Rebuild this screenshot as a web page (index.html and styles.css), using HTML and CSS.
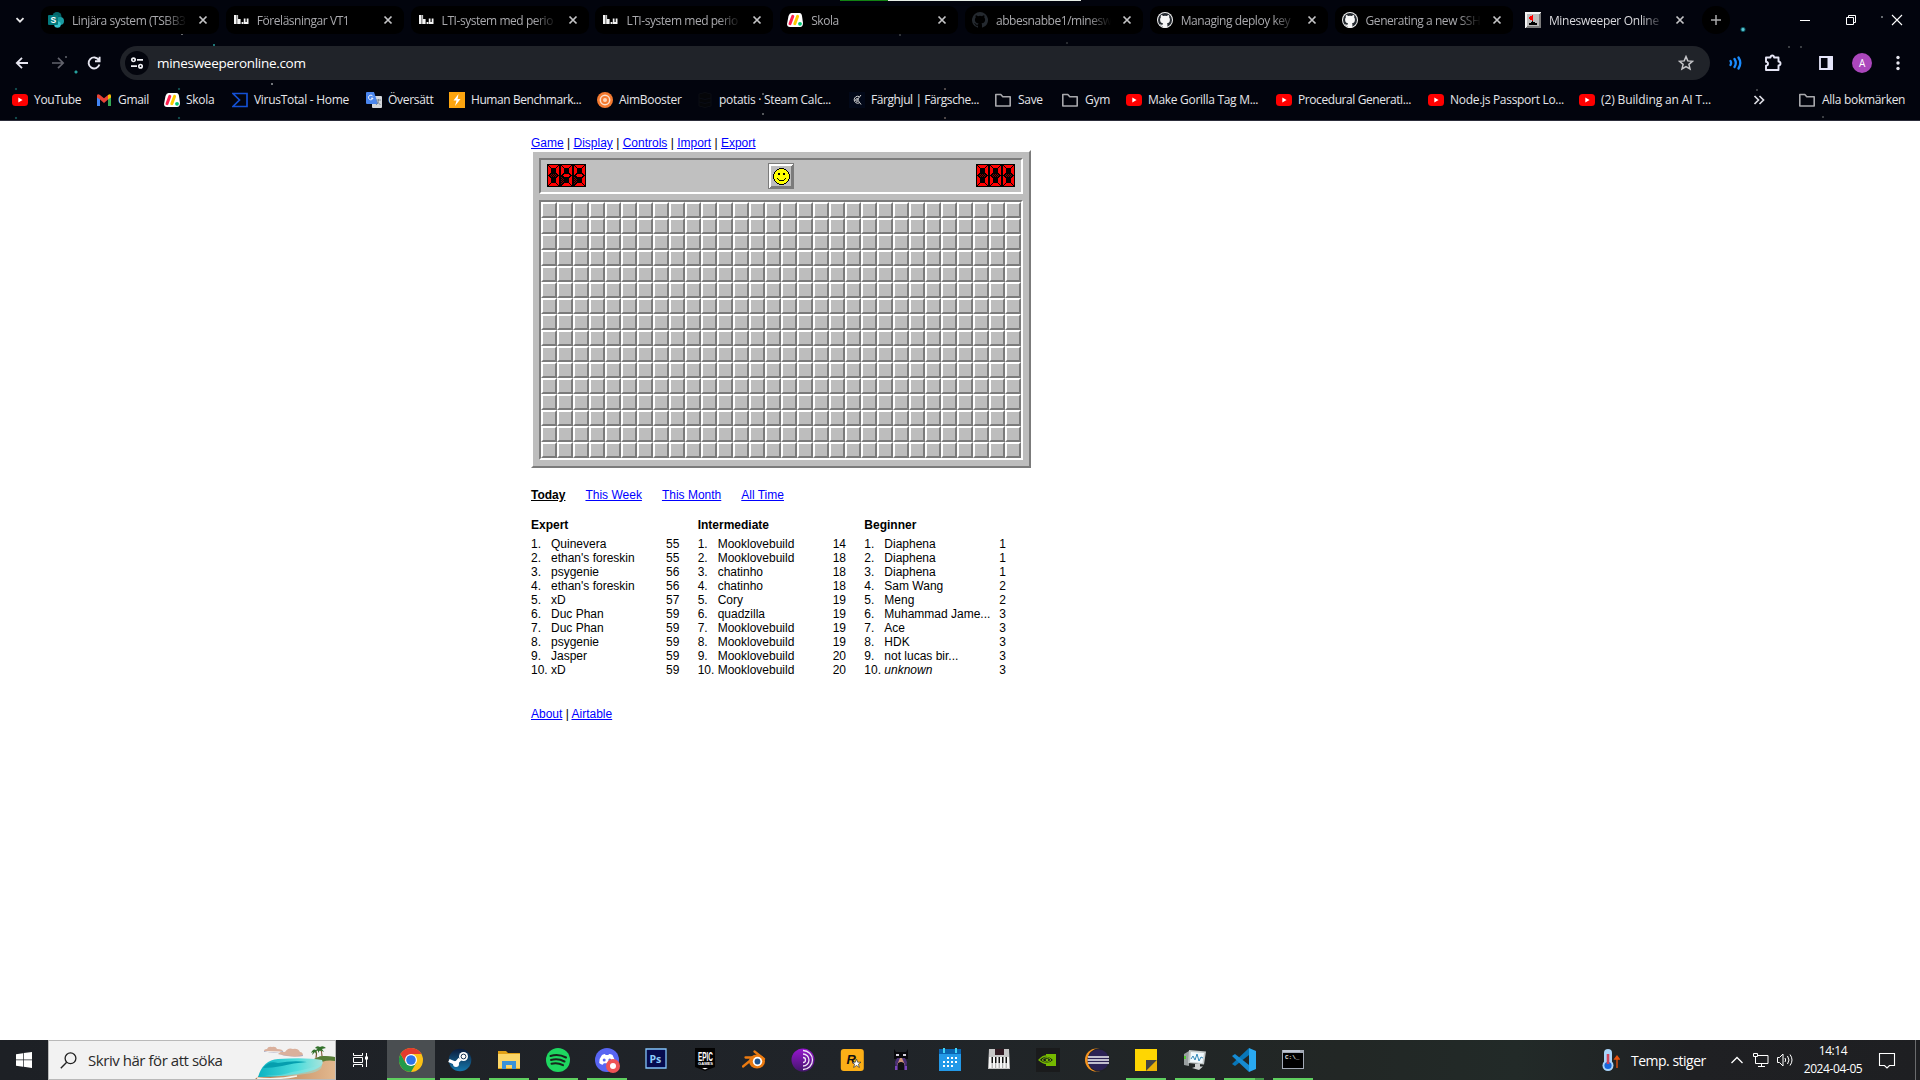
FILE: index.html
```html
<!DOCTYPE html>
<html lang="sv">
<head>
<meta charset="utf-8">
<title>Minesweeper Online</title>
<link rel="stylesheet" href="styles.css">
</head>
<body>
<svg class="defs" width="0" height="0">
  <symbol id="x" viewBox="0 0 10 10"><path d="M1.500 1.500l7 7M8.500 1.500l-7 7" fill="none" stroke="#c4c4c6" stroke-width="1.700"/></symbol>
  <symbol id="liu" viewBox="0 0 16 16"><path d="M1 3h2.600v9H1zM4.200 3h.9v9h-.9zM5 7h2.600v5H5zM8.600 10h1.800v2H8.600zM10.800 6.500h1.700v3.500h1.200V6.500h1.800V12h-4.700z" fill="#f4f4f4"/></symbol>
  <symbol id="monday" viewBox="0 0 16 16"><path d="M4.500 1h8q2 0 2.500 3l1 7q0 4-3 4H3q-3 0-3-3l1.500-8Q2.500 1 4.500 1z" fill="#fff"/><path d="M3 11.700L5.800 4.300" stroke="#ff1f50" stroke-width="3" stroke-linecap="round"/><path d="M7.800 11.700l2.800-7.400" stroke="#ffcb00" stroke-width="3" stroke-linecap="round"/><circle cx="13" cy="11.800" r="1.900" fill="#00c875"/></symbol>
  <symbol id="github" viewBox="0 0 16 16"><path d="M8 0a8 8 0 0 0-2.530 15.590c.4.070.55-.17.55-.38v-1.490c-2.230.48-2.700-.94-2.700-.94-.36-.92-.89-1.170-.89-1.170-.73-.5.050-.49.050-.49.800.060 1.230.83 1.230.83.72 1.220 1.870.87 2.330.66.070-.52.280-.87.510-1.070-1.780-.2-3.640-.89-3.640-3.950 0-.87.310-1.590.82-2.150-.080-.2-.36-1.020.080-2.120 0 0 .67-.21 2.200.82a7.600 7.600 0 0 1 4 0c1.530-1.040 2.200-.82 2.200-.82.44 1.100.16 1.920.080 2.120.51.560.82 1.270.82 2.150 0 3.070-1.870 3.750-3.650 3.950.29.250.54.730.54 1.480v2.200c0 .21.150.46.550.38A8 8 0 0 0 8 0z"/></symbol>
  <symbol id="github-ring" viewBox="0 0 16 16"><circle cx="8" cy="8" r="8" fill="#f2f2f2"/><circle cx="8" cy="8" r="7" fill="#24292f"/><path d="M4 3q1.200 0 2.300.9 1.700-.4 3.400 0Q10.800 3 12 3q.5 1.200.1 2.200.9 1 .8 2.500 0 3.100-3 3.600.5.500.5 1.400v2.700Q8 16.200 5.600 15.400v-1.500q-2 .3-2.800-1.800 2 1.200 2.900.3 0-.8.400-1.100-3-.5-3-3.600-.1-1.500.8-2.500Q3.500 4.200 4 3z" fill="#f6f6f6"/></symbol>
  <symbol id="youtube" viewBox="0 0 16 16"><rect y="2" width="16" height="12" rx="3.500" fill="#f00"/><path d="M6.300 5.600v4.800L10.600 8z" fill="#fff"/></symbol>
  <symbol id="folder" viewBox="0 0 18 16"><path d="M1.800 2.500h5l2 2.200h7.400v9.300H1.800z" fill="none" stroke="#a8a8ac" stroke-width="1.600" stroke-linejoin="round"/></symbol>
  <pattern id="dim" width="2" height="2" patternUnits="userSpaceOnUse"><path d="M0 0h1v1H0zM1 1h1v1H1z" fill="#7b0000"/></pattern>
  <symbol id="d0" viewBox="0 0 13 23"><path d="M0 0h13v23H0z" fill="#000"/><path d="M2 1h9v1h-1v1H9v1H4V3H3V2H2zM1 2h1v1h1v1h1v5H3v1H2v1H1zM12 2h-1v1h-1v1H9v5h1v1h1v1h1zM1 12h1v1h1v1h1v5H3v1H2v1H1zM12 12h-1v1h-1v1H9v5h1v1h1v1h1zM2 22h9v-1h-1v-1H9v-1H4v1H3v1H2z" fill="#f00"/><path d="M4 10h5v1h1v1H9v1H4v-1H3v-1h1z" fill="url(#dim)"/></symbol>
  <symbol id="d9" viewBox="0 0 13 23"><path d="M0 0h13v23H0z" fill="#000"/><path d="M2 1h9v1h-1v1H9v1H4V3H3V2H2zM1 2h1v1h1v1h1v5H3v1H2v1H1zM12 2h-1v1h-1v1H9v5h1v1h1v1h1zM4 10h5v1h1v1H9v1H4v-1H3v-1h1zM12 12h-1v1h-1v1H9v5h1v1h1v1h1zM2 22h9v-1h-1v-1H9v-1H4v1H3v1H2z" fill="#f00"/><path d="M1 12h1v1h1v1h1v5H3v1H2v1H1z" fill="url(#dim)"/></symbol>
</svg>

<header class="chrome">
  <div class="top-strip"></div>
  <div class="tabstrip">
    <svg class="tab-search" viewBox="0 0 10 10"><path d="M1.500 3.200L5 6.700l3.500-3.500" fill="none" stroke="#e8e8ea" stroke-width="1.800"/></svg>
    <div class="tab"><svg class="ico" viewBox="0 0 16 16"><circle cx="9" cy="4.500" r="4.500" fill="#03666a"/><circle cx="12" cy="9" r="4" fill="#1a9ba1"/><circle cx="9.500" cy="12.500" r="3.300" fill="#37c6d0"/><rect y="3" width="10" height="10" rx="1" fill="#03787c"/><text class="sp" x="2.500" y="11">S</text></svg><span class="t">Linjära system (TSBB3</span><svg class="cl"><use href="#x"/></svg></div>
    <div class="tab"><svg class="ico"><use href="#liu"/></svg><span class="t">Föreläsningar VT1</span><svg class="cl"><use href="#x"/></svg></div>
    <div class="tab"><svg class="ico"><use href="#liu"/></svg><span class="t">LTI-system med perio</span><svg class="cl"><use href="#x"/></svg></div>
    <div class="tab"><svg class="ico"><use href="#liu"/></svg><span class="t">LTI-system med perio</span><svg class="cl"><use href="#x"/></svg></div>
    <div class="tab"><svg class="ico"><use href="#monday"/></svg><span class="t">Skola</span><svg class="cl"><use href="#x"/></svg></div>
    <div class="tab"><svg class="ico gh-dark"><use href="#github"/></svg><span class="t">abbesnabbe1/minesw</span><svg class="cl"><use href="#x"/></svg></div>
    <div class="tab"><svg class="ico"><use href="#github-ring"/></svg><span class="t">Managing deploy key</span><svg class="cl"><use href="#x"/></svg></div>
    <div class="tab"><svg class="ico"><use href="#github-ring"/></svg><span class="t">Generating a new SSH</span><svg class="cl"><use href="#x"/></svg></div>
    <div class="tab active"><svg class="ico" viewBox="0 0 16 16" shape-rendering="crispEdges"><path d="M0 0h16v16H0z" fill="#7b7b7b"/><path d="M0 0h16L14 2v12H2L0 16z" fill="#f4f4f4"/><path d="M2 2h12v12H2z" fill="#bdbdbd"/><path d="M8 3v6H7V8H5V7H4V5h1V4h2V3z" fill="#f00"/><path d="M7 9h1v1h2v1h2v2H4v-2h2v-1h1z"/></svg><span class="t">Minesweeper Online</span><svg class="cl"><use href="#x"/></svg></div>
    <div class="newtab"><svg viewBox="0 0 12 12"><path d="M6 1v10M1 6h10" stroke="#a9a9ab" stroke-width="1.500"/></svg></div>
    <div class="winctl">
      <svg viewBox="0 0 12 12"><path d="M1 6.500h10" stroke="#fff"/></svg>
      <svg viewBox="0 0 12 12"><path d="M1.500 3.500h7v7h-7zM3.500 3V1.500h7v7H9" fill="none" stroke="#fff"/></svg>
      <svg viewBox="0 0 12 12"><path d="M1 1l10 10M11 1L1 11" stroke="#fff" stroke-width="1.100"/></svg>
    </div>
  </div>

  <div class="toolbar">
    <svg class="nav" viewBox="0 0 16 16"><path d="M14 8H3M8 2.800L2.800 8 8 13.200" fill="none" stroke="#e6e6f0" stroke-width="1.800"/></svg>
    <svg class="nav" viewBox="0 0 16 16"><path d="M2 8h11M8 2.800L13.200 8 8 13.200" fill="none" stroke="#62636c" stroke-width="1.700"/></svg>
    <svg class="nav" viewBox="0 0 16 16"><path d="M12.800 5A5.500 5.500 0 1 0 13.400 9.500M13.600 1.800v4.400H9" fill="none" stroke="#e6e6f0" stroke-width="1.900"/></svg>
    <div class="omnibox">
      <span class="site"><svg viewBox="0 0 14 12"><g fill="none" stroke="#f0f0f4" stroke-width="1.700"><circle cx="3.500" cy="2.800" r="1.700"/><path d="M7 2.800h6M1 9.200h6"/><circle cx="10.500" cy="9.200" r="1.700"/></g></svg></span>
      <span class="url">minesweeperonline.com</span>
      <svg class="star" viewBox="0 0 16 16"><path d="M8 1.600l1.800 4.300 4.700.4-3.600 3 1.100 4.600L8 11.500l-4 2.400 1.100-4.600-3.600-3 4.700-.4z" fill="none" stroke="#c6c6ca" stroke-width="1.500"/></svg>
    </div>
    <div class="actions">
      <svg viewBox="0 0 16 16"><path d="M3.500 6q1.200 2 0 4M7.500 4q2.600 4 0 8M11.500 2.500q3.600 5.500 0 11" fill="none" stroke="#1a8cff" stroke-width="2.300" stroke-linecap="round"/></svg>
      <svg viewBox="0 0 18 18"><path d="M2 3.500h4.500q.2-2 1.800-2t1.800 2H14.500V7.500q2 .2 2 2t-2 2V16H2v-4.300q2-.3 2-2t-2-2z" fill="none" stroke="#e6e6f5" stroke-width="1.900" stroke-linejoin="round"/></svg>
      <svg viewBox="0 0 16 16"><path d="M2 2h12v12H2z" fill="none" stroke="#e6e6fa" stroke-width="1.800"/><path d="M9.500 1.500H15v13H9.500z" fill="#e6e6fa"/></svg>
      <span class="avatar">A</span>
      <svg viewBox="0 0 16 16"><g fill="#e6e6ee"><circle cx="8" cy="2.500" r="1.700"/><circle cx="8" cy="8" r="1.700"/><circle cx="8" cy="13.500" r="1.700"/></g></svg>
    </div>
  </div>

  <nav class="bookmarks">
    <span class="bm"><svg><use href="#youtube"/></svg>YouTube</span>
    <span class="bm"><svg viewBox="0 0 16 16"><path d="M1 3.500V14h3V7z" fill="#4285f4"/><path d="M15 3.500V14h-3V7z" fill="#34a853"/><path d="M1 3.500Q1.500 1.500 4 3l4 3.300L12 3v4.500L8 11 4 7.500 1 5.500z" fill="#ea4335"/><path d="M12 3q2.500-1.500 3 .5v2l-3 2z" fill="#fbbc04"/></svg>Gmail</span>
    <span class="bm"><svg><use href="#monday"/></svg>Skola</span>
    <span class="bm"><svg viewBox="0 0 16 16"><path d="M1 1.500h14v13H1L7.500 8z" fill="none" stroke="#1450d2" stroke-width="1.700"/></svg>VirusTotal - Home</span>
    <span class="bm"><svg viewBox="0 0 16 16"><rect x="6" y="4" width="10" height="12" rx="1" fill="#d4d7dc"/><path d="M1 0h7l4 12H1q-1 0-1-1V1q0-1 1-1z" fill="#4a86ee"/><path d="M6.800 4.300A2.300 2.300 0 1 0 7 6.200H5" fill="none" stroke="#fff" stroke-width="1"/><path d="M10 8h5M12.500 7v1q0 3-2.500 5M11 9.500l3.500 3.500" fill="none" stroke="#697889" stroke-width=".8"/></svg>Översätt</span>
    <span class="bm tight"><svg viewBox="0 0 16 16"><path d="M0 0h16v16H0z" fill="#fda50f"/><path d="M9.500 2L4.500 8.500h3L6 14l5.500-7H8.600z" fill="#fff"/></svg>Human Benchmark...</span>
    <span class="bm"><svg viewBox="0 0 16 16"><circle cx="8" cy="8" r="8" fill="#f47a30"/><circle cx="8" cy="8" r="4.700" fill="none" stroke="#fbe0cc" stroke-width="1.500"/><circle cx="8" cy="8" r="2" fill="#fbd6bd"/></svg>AimBooster</span>
    <span class="bm"><svg viewBox="0 0 16 16"><path d="M2 2q6-3 12 0v12q-6 3-12 0zM2 6q6 3 12 0M2 10q6 3 12 0" fill="#050609" stroke="#0b0d14"/></svg>potatis · Steam Calc...</span>
    <span class="bm tight"><svg viewBox="0 0 16 16"><path d="M0 0h16v16H0z" fill="#020818"/><path d="M10 4.500A3.500 3.500 0 1 0 10 11M12 3L8.500 7.500M12 12.500L9.500 9" fill="none" stroke="#d5d5d5"/><circle cx="8" cy="8" r="1.300" fill="none" stroke="#ddd"/></svg>Färghjul | Färgsche...</span>
    <span class="bm wide"><svg><use href="#folder"/></svg>Save</span>
    <span class="bm wide"><svg><use href="#folder"/></svg>Gym</span>
    <span class="bm"><svg><use href="#youtube"/></svg>Make Gorilla Tag M...</span>
    <span class="bm tight"><svg><use href="#youtube"/></svg>Procedural Generati...</span>
    <span class="bm"><svg><use href="#youtube"/></svg>Node.js Passport Lo...</span>
    <span class="bm loose"><svg><use href="#youtube"/></svg>(2) Building an AI T...</span>
    <span class="bm"><svg class="more" viewBox="0 0 12 12"><path d="M1.500 2l4 4-4 4M6.500 2l4 4-4 4" fill="none" stroke="#dcdce4" stroke-width="1.700"/></svg></span>
    <span class="bm wide"><svg><use href="#folder"/></svg>Alla bokmärken</span>
  </nav>
</header>

<main class="page">
  <div class="menu"><a>Game</a> | <a>Display</a> | <a>Controls</a> | <a>Import</a> | <a>Export</a></div>

  <div class="game">
    <div class="panel">
      <div class="led"><svg><use href="#d0"/></svg><svg><use href="#d9"/></svg><svg><use href="#d9"/></svg></div>
      <svg class="face" viewBox="0 0 26 26" shape-rendering="crispEdges"><path d="M0 0h26v26H0z" fill="#7b7b7b"/><path d="M1 1h24v1h-1v1h-1v20H3v1H2v1H1z" fill="#fff"/><path d="M3 3h20v20H3z" fill="#bdbdbd"/><path d="M11 5h5v1h2v1h1v1h1v1h1v2h1v5h-1v2h-1v1h-1v1h-1v1h-2v1h-5v-1H9v-1H8v-1H7v-1H6v-2H5v-5h1V9h1V8h1V7h1V6h2z" fill="#000"/><path d="M11 6h5v1h2v1h1v1h1v2h1v5h-1v2h-1v1h-1v1h-2v1h-5v-1H9v-1H8v-1H7v-2H6v-5h1V9h1V8h1V7h2z" fill="#ff0"/><path d="M10 10h2v2h-2zM15 10h2v2h-2zM9 15h1v1H9zM17 15h1v1h-1zM10 16h1v1h-1zM16 16h1v1h-1zM11 17h5v1h-5z"/></svg>
      <div class="led"><svg><use href="#d0"/></svg><svg><use href="#d0"/></svg><svg><use href="#d0"/></svg></div>
    </div>
    <div class="board" id="board"></div>
  </div>

  <div class="periods"><a class="current">Today</a><a>This Week</a><a>This Month</a><a>All Time</a></div>

  <div class="scores">
    <section><h2>Expert</h2><table>
      <tr><td>1.</td><td>Quinevera</td><td>55</td></tr>
      <tr><td>2.</td><td>ethan's foreskin</td><td>55</td></tr>
      <tr><td>3.</td><td>psygenie</td><td>56</td></tr>
      <tr><td>4.</td><td>ethan's foreskin</td><td>56</td></tr>
      <tr><td>5.</td><td>xD</td><td>57</td></tr>
      <tr><td>6.</td><td>Duc Phan</td><td>59</td></tr>
      <tr><td>7.</td><td>Duc Phan</td><td>59</td></tr>
      <tr><td>8.</td><td>psygenie</td><td>59</td></tr>
      <tr><td>9.</td><td>Jasper</td><td>59</td></tr>
      <tr><td>10.</td><td>xD</td><td>59</td></tr>
    </table></section>
    <section><h2>Intermediate</h2><table>
      <tr><td>1.</td><td>Mooklovebuild</td><td>14</td></tr>
      <tr><td>2.</td><td>Mooklovebuild</td><td>18</td></tr>
      <tr><td>3.</td><td>chatinho</td><td>18</td></tr>
      <tr><td>4.</td><td>chatinho</td><td>18</td></tr>
      <tr><td>5.</td><td>Cory</td><td>19</td></tr>
      <tr><td>6.</td><td>quadzilla</td><td>19</td></tr>
      <tr><td>7.</td><td>Mooklovebuild</td><td>19</td></tr>
      <tr><td>8.</td><td>Mooklovebuild</td><td>19</td></tr>
      <tr><td>9.</td><td>Mooklovebuild</td><td>20</td></tr>
      <tr><td>10.</td><td>Mooklovebuild</td><td>20</td></tr>
    </table></section>
    <section><h2>Beginner</h2><table>
      <tr><td>1.</td><td>Diaphena</td><td>1</td></tr>
      <tr><td>2.</td><td>Diaphena</td><td>1</td></tr>
      <tr><td>3.</td><td>Diaphena</td><td>1</td></tr>
      <tr><td>4.</td><td>Sam Wang</td><td>2</td></tr>
      <tr><td>5.</td><td>Meng</td><td>2</td></tr>
      <tr><td>6.</td><td>Muhammad Jame...</td><td>3</td></tr>
      <tr><td>7.</td><td>Ace</td><td>3</td></tr>
      <tr><td>8.</td><td>HDK</td><td>3</td></tr>
      <tr><td>9.</td><td>not lucas bir...</td><td>3</td></tr>
      <tr><td>10.</td><td><i>unknown</i></td><td>3</td></tr>
    </table></section>
  </div>

  <div class="links"><a>About</a> | <a>Airtable</a></div>
</main>

<footer class="taskbar">
  <div class="start"><svg viewBox="0 0 16 16"><path d="M0 2.300L7 1.200V7.600H0zM7.700 1.100L16 0v7.600H7.700zM0 8.300h7v6.400L0 13.700zM7.700 8.300H16V16l-8.300-1.200z" fill="#fff"/></svg></div>
  <div class="search">
    <svg class="lens" viewBox="0 0 17 17"><circle cx="10.500" cy="6.300" r="5.400" fill="none" stroke="#222" stroke-width="1.300"/><path d="M6.700 10.200L.8 16.200" stroke="#222" stroke-width="1.400"/></svg>
    <span>Skriv här för att söka</span>
    <svg class="beach" viewBox="0 0 80 38">
      <defs><linearGradient id="sea"><stop offset="0" stop-color="#0bb3c2"/><stop offset=".6" stop-color="#4cdcdc"/><stop offset="1" stop-color="#a8e4dc"/></linearGradient><linearGradient id="sand" x2="1"><stop offset="0" stop-color="#b97a4e"/><stop offset="1" stop-color="#e2b88e"/></linearGradient></defs>
      <path d="M9 10q0-2 3-2 1-3 5-2 4-1 5 2 6 0 6 2.500zM23 13q2-3 7-2 3-5 8-3 5-1 7 3 3 0 3 4-12 2-25-2z" fill="#dab09c"/><path d="M9 10q10 3 19 0v1H9zM23 13q12 4 25 1v1q-12 1-25-2z" fill="#aaa9c2"/>
      <path d="M52 24q9-9 17-9l11 1v12l-18-1z" fill="#567c35"/><path d="M61 17q1-4 0-7M67 15q0-5-2-8" fill="none" stroke="#7a5330" stroke-width="1.200"/><path d="M56 12q2-5 5-3 3-3 5 1-3-1-5 0l1 4-2-3-3 3 1-3zM60 7q2-3 5-1 3-2 6 1l-4 1 2 3-4-2-2 3v-4z" fill="#32712b"/>
      <path d="M0 38q9-9 28-10 18-1 38-11l14 2v19z" fill="url(#sand)"/><path d="M52 24q9-9 17-9l11 1v4q-12-2-18 5z" fill="#567c35"/><path d="M3 36q5-17 20-18 28-2 44 1 4 7-15 12-22 5-49 5z" fill="url(#sea)"/><path d="M5 34q18 2 32-3 13-2 30-8 1 8-17 10-23 4-45 1z" fill="#8ce6e4" opacity=".5"/><path d="M8 27q6-8 15-5 15-3 29-1-14 1-25 4-10 2-19 2z" fill="#059eae"/><path d="M2 37q20 2 40-2" fill="none" stroke="#f5f3ea" stroke-width="1.500"/>
    </svg>
  </div>
  <div class="taskview"><svg viewBox="0 0 17 16"><path d="M1.500 1v2.500h9V1M1.500 15v-2.500h9V15M1.500 5.500h9v5h-9zM14.500 1v14" fill="none" stroke="#fff"/><path d="M13 4.500h3v3h-3z" fill="#fff"/></svg></div>

  <div class="apps">
    <div class="app focus run"><svg viewBox="0 0 24 24"><circle cx="12" cy="12" r="12" fill="#fbc116"/><path d="M1.600 6l5.200 9h10.400L12 24A12 12 0 0 1 1.600 6z" fill="#239a4b"/><path d="M1.600 6A12 12 0 0 1 22.400 6H12L6.800 15z" fill="#e33b2e"/><circle cx="12" cy="12" r="6" fill="#fff"/><circle cx="12" cy="12" r="4.800" fill="#2d74e8"/></svg></div>
    <div class="app run"><svg viewBox="0 0 24 24"><defs><linearGradient id="st" x2="0" y2="1"><stop offset="0" stop-color="#0b1b3b"/><stop offset="1" stop-color="#1578ac"/></linearGradient></defs><circle cx="12" cy="12" r="11.300" fill="url(#st)"/><path d="M.9 12.500l7 3L12 11" fill="none" stroke="#fff" stroke-width="3.500"/><circle cx="8" cy="16" r="3" fill="#fff"/><circle cx="15.500" cy="8.500" r="4.500" fill="#fff"/><circle cx="15.500" cy="8.500" r="2.400" fill="none" stroke="#15304f"/></svg></div>
    <div class="app run"><svg viewBox="0 0 24 24"><path d="M1 3h8l2 2h12v16H1z" fill="#e2a116"/><path d="M1 6h22v14H1z" fill="#fcd667"/><path d="M5 21v-8h14v8h-4v-4H9v4z" fill="#3a92d8"/></svg></div>
    <div class="app run"><svg viewBox="0 0 24 24"><circle cx="12" cy="12" r="12" fill="#1ed760"/><path d="M4.500 8q8-2.500 15.500 1.500M5 12q7-2 13.500 1.500M5.500 15.800q6-1.500 11.500 1.400" fill="none" stroke="#18251c" stroke-width="2" stroke-linecap="round"/></svg></div>
    <div class="app run"><svg viewBox="0 0 24 24" class="over"><circle cx="12" cy="12" r="12" fill="#5865f2"/><path d="M7 7q2-1 3-1l.6 1h2.800l.6-1q2 .2 3.500 1 2.500 4 2.300 8-2 1.500-3.600 1.800l-1-1.600H8.800l-1 1.600Q6 16.500 4.200 15 4 10.500 7 7z" fill="#fff"/><circle cx="9.200" cy="12" r="1.500" fill="#5865f2"/><circle cx="14.800" cy="12" r="1.500" fill="#5865f2"/><circle cx="18" cy="18" r="7" fill="#ee5355"/><circle cx="18" cy="18" r="3" fill="#fff"/></svg></div>
    <div class="app"><svg viewBox="0 0 24 24"><path d="M2 1h20v19H2z" fill="#050b4e" stroke="#83c3fa" stroke-width="1.300"/><text class="ps" x="5.500" y="14.500">Ps</text></svg></div>
    <div class="app"><svg viewBox="0 0 24 24"><path d="M2 0h20v19l-10 4-10-4z" fill="#030303"/><text class="epic" x="5" y="12.500" textLength="15" lengthAdjust="spacingAndGlyphs">EPIC</text><text class="epic-s" x="5" y="17" textLength="15" lengthAdjust="spacingAndGlyphs">GAMES</text><path d="M9 20h6l-3 1.400z" fill="#fff"/></svg></div>
    <div class="app"><svg viewBox="0 0 24 24"><path d="M12.500 3.500L22 11M1 18.500L12 9.500M3.500 9.500H15" stroke="#ea7a10" stroke-width="2.300" stroke-linecap="round"/><ellipse cx="15" cy="13.500" rx="8" ry="7" fill="#ea7a10"/><circle cx="15.500" cy="13.500" r="4.700" fill="#fff"/><circle cx="15.500" cy="13.500" r="2.900" fill="#20528a"/></svg></div>
    <div class="app"><svg viewBox="0 0 24 24"><defs><linearGradient id="tor" x2="0" y2="1"><stop offset="0" stop-color="#9715cf"/><stop offset="1" stop-color="#43166b"/></linearGradient></defs><circle cx="12" cy="12" r="11.500" fill="url(#tor)"/><path d="M12 9.500a2.500 2.500 0 0 1 0 5M12 6a6 6 0 0 1 0 12M12 2.500a9.500 9.500 0 0 1 0 19" fill="none" stroke="#efe5f5" stroke-width="1.300"/></svg></div>
    <div class="app"><svg viewBox="0 0 24 24"><rect x=".8" y="1" width="23" height="22" rx="3" fill="#fcaf17"/><text class="rk" x="6.500" y="16">R</text><path d="M16.500 11l1.200 3.200h3.300l-2.600 2 1 3.300-2.900-2-2.900 2 1-3.300-2.600-2h3.300z" fill="#fff" stroke="#333" stroke-width=".7"/></svg></div>
    <div class="app"><svg viewBox="0 0 24 24"><path d="M5 1l2 3h10l2-3v10H5z" fill="#08080b"/><path d="M7 6h3v2H7zM14 6h3v2h-3z" fill="#d6d3de"/><path d="M8 10h8l2 4-1 8H7l-1-8z" fill="#4b2f75"/><path d="M11 10h2l3 7-3-3h-2l-3 3z" fill="#cf9678"/><path d="M9 15l3-1 3 1v7H9z" fill="#111"/><path d="M6 18h2v4H6zM16 18h2v4h-2z" fill="#7a45ba"/></svg></div>
    <div class="app"><svg viewBox="0 0 24 24"><path d="M1 2h22v21H1z" fill="#2399e8"/><path d="M1 1h22v5H1z" fill="#0a64b0"/><path d="M5 0h2v5H5zM17 0h2v5h-2z" fill="#42d6f8"/><path d="M9 9h2v2H9zM13 9h2v2h-2zM17 9h2v2h-2zM5 13h2v2H5zM9 13h2v2H9zM13 13h2v2h-2zM17 13h2v2h-2zM5 17h2v2H5zM9 17h2v2H9zM13 17h2v2h-2z" fill="#fff"/></svg></div>
    <div class="app"><svg viewBox="0 0 24 24"><path d="M2 1h20l1 20H1z" fill="#c6c6c6"/><path d="M8 1h9v6H8z" fill="#301a22"/><path d="M2 9h20v11H2z" fill="#f7f7f7"/><path d="M4.500 9h1.500v6H4.500zM8 9h1.500v6H8zM11.500 9H13v6h-1.500zM15 9h1.500v6H15zM18.500 9H20v6h-1.500z" fill="#111"/><path d="M5.200 15v5M8.700 15v5M12.200 15v5M15.700 15v5M19.200 15v5" stroke="#777" stroke-width=".7"/></svg></div>
    <div class="app"><svg viewBox="0 0 24 24"><path d="M0 0h24v24H0z" fill="#1a1b1c"/><path d="M10 6h10v12H10z" fill="#76b900"/><path d="M3 12q7-8 15 0-7 7-15 0z" fill="#1a1b1c" stroke="#76b900" stroke-width="1.300"/><path d="M6 12q5-5 9 0-4 4-9 0z" fill="none" stroke="#76b900"/><circle cx="11" cy="12" r="1.300" fill="#76b900"/></svg></div>
    <div class="app"><svg viewBox="0 0 24 24"><circle cx="11.500" cy="12" r="11.500" fill="#f7941e"/><circle cx="14" cy="12" r="11.500" fill="#202328"/><circle cx="13.500" cy="12" r="10.500" fill="#2c2255"/><path d="M3 9h21M2.500 12H24M3 15h21" stroke="#f2f2f6" stroke-width="1.600"/></svg></div>
    <div class="app run"><svg viewBox="0 0 24 24"><path d="M1 1h22v11L12 23H1z" fill="#ffd602"/><path d="M12 23V12h11z" fill="#444"/><path d="M12 23h11V12z" fill="#eab308"/></svg></div>
    <div class="app run"><svg viewBox="0 0 24 24"><path d="M1 6l5-3v15l-5-1z" fill="#9aa0a0"/><path d="M1 8h2v3H1z" fill="#52ce2f"/><path d="M6 2l17 1.500-2 13L5 15z" fill="#c3c9c9"/><path d="M8 4l13 1-1.500 10L7 14z" fill="#f1f9fd"/><path d="M8 11l2-3 2 4 2-6 2 7 2-4 2 1" fill="none" stroke="#3389b9"/><path d="M12 16h5v2.500h3l-4 3.500-7-2 3-1z" fill="#ced1d1"/></svg></div>
    <div class="app run split"><svg viewBox="0 0 24 24"><path d="M17 0l7 3v18l-7 3z" fill="#29a9f2"/><path d="M17 0v7L3 18l-3-2z" fill="#0876b8"/><path d="M17 24v-7L3 6 0 8z" fill="#168bd2"/></svg></div>
    <div class="app run"><svg viewBox="0 0 24 24"><path d="M1 2h22v19H1z" fill="#a3aab6"/><path d="M2 5h20v15H2z" fill="#000"/><path d="M2 3h17" stroke="#dce3ef"/><text class="cmd" x="4" y="11">C:\_</text></svg></div>
  </div>

  <div class="tray">
    <svg class="thermo" viewBox="0 0 18 24"><rect x="2" y="1" width="8" height="18" rx="4" fill="#a8d4fa"/><circle cx="6" cy="17.500" r="5.500" fill="#a8d4fa"/><circle cx="6" cy="17.500" r="3.600" fill="#1867dc"/><path d="M6 6v10" stroke="#d0445d" stroke-width="2.600"/><path d="M15 20V8M12.800 11L15 8l2.200 3z" fill="#e8500c" stroke="#e8500c" stroke-width="1.300"/></svg>
    <span class="temp">Temp. stiger</span>
    <svg class="chev" viewBox="0 0 14 8"><path d="M1.500 7L7 1.500 12.500 7" fill="none" stroke="#fff" stroke-width="1.300"/></svg>
    <svg class="net" viewBox="0 0 17 16"><path d="M6 3.500h10v8H3.500V7M9.500 12v2.500M6 14.500h7" fill="none" stroke="#fff"/><path d="M1.500 1.500h4v3h-4zM3.500 5v3" fill="none" stroke="#fff"/></svg>
    <svg class="vol" viewBox="0 0 17 16"><path d="M1.500 5.500h2L7 2v12l-3.500-3.500h-2z" fill="none" stroke="#fff"/><path d="M9 6q1.400 2 0 4M11.500 4q3 4 0 8M14 2.500q4 5.500 0 11" fill="none" stroke="#fff"/></svg>
    <div class="clock"><span>14:14</span><span>2024-04-05</span></div>
    <svg class="note" viewBox="0 0 18 17"><path d="M1.500 1.500h15v12h-5L9 16l-2.500-2.500h-5z" fill="none" stroke="#fff" stroke-width="1.100"/></svg>
  </div>
</footer>
<script src="board.js"></script>
</body>
</html>
```

FILE: styles.css
```css
* { box-sizing: border-box; }
body { margin: 0; height: 1080px; display: flex; flex-direction: column; background: #fff; font-family: "Liberation Sans", Arial, sans-serif; font-size: 12px; color: #000; overflow: hidden; }
svg { display: block; flex: none; }
.defs { position: absolute; }

/* browser chrome */
.chrome {
  height: 121px; flex: none; display: flex; flex-direction: column;
  border-bottom: 1px solid #2c2d3a; color: #e6e6ea;
  font: 12px "Open Sans", "Noto Sans", sans-serif; letter-spacing: -0.3px;
  background:
    radial-gradient(circle at 1743px 29.5px, #5cc6d3 1px, #0b5964 2px, transparent 3px),
    radial-gradient(circle at 1882px 17px, #666b70 1px, transparent 1.5px),
    radial-gradient(circle at 76px 72px, #25a19d 1px, transparent 2px),
    radial-gradient(circle at 66px 57px, #4a4d55 .8px, transparent 1.3px),
    radial-gradient(circle at 214px 45px, #1e7577 .8px, transparent 1.3px),
    radial-gradient(circle at 182px 34px, #6a6c70 .7px, transparent 1.2px),
    radial-gradient(circle at 272px 84px, #73767b .8px, transparent 1.3px),
    radial-gradient(circle at 16px 89px, #11494b 1px, transparent 1.6px),
    radial-gradient(circle at 16px 118px, #11494b 1px, transparent 1.6px),
    radial-gradient(circle at 179px 89px, #11494b 1px, transparent 1.6px),
    radial-gradient(circle at 179px 118px, #11494b 1px, transparent 1.6px),
    radial-gradient(circle at 763px 94px, #54575b .8px, transparent 1.5px),
    radial-gradient(circle at 763px 114px, #54575b .8px, transparent 1.5px),
    radial-gradient(circle at 945px 89px, #4d4647 .8px, transparent 1.5px),
    radial-gradient(circle at 945px 118px, #4d4647 .8px, transparent 1.5px),
    radial-gradient(circle at 900px 35px, #303338 .8px, transparent 1.5px),
    radial-gradient(circle at 1067px 43px, #282b30 .8px, transparent 1.5px),
    radial-gradient(circle at 1789px 47px, #3b3e43 .8px, transparent 1.4px),
    radial-gradient(circle at 1801px 47px, #3b3e43 .8px, transparent 1.4px),
    radial-gradient(circle at 1757px 90px, #3b3e43 .8px, transparent 1.4px),
    radial-gradient(circle at 1823px 117px, #3b3e43 .8px, transparent 1.4px),
    #02040d;
}
.top-strip { height: 1px; width: 241px; margin-left: 840px; background: linear-gradient(90deg, #128212 48px, #e8efe8 48px); }
.tabstrip { height: 38px; display: flex; align-items: center; }
.tab-search { width: 10px; height: 10px; margin: 0 16px 0 15px; }
.tab { width: 178px; height: 28px; margin-right: 6.8px; padding-left: 7px; border-radius: 9px; background: #000; display: flex; align-items: center; flex: none; color: #a9a9ad; }
.tab.active { background: none; color: #d8d8dc; margin-left: -1.5px; }
.ico { width: 16px; height: 16px; margin-right: 8px; }
.gh-dark { fill: #24292f; }
.sp { font: bold 8.5px "Liberation Sans", sans-serif; fill: #fff; }
.t { width: 115px; height: 18px; line-height: 18px; padding-top: 1px; white-space: nowrap; letter-spacing: -0.45px; mask-image: linear-gradient(90deg, #000 80%, transparent); }
.tab.active .t { letter-spacing: -0.3px; }
.cl { width: 10px; height: 10px; margin-left: 11px; }
.newtab { width: 28px; height: 28px; border-radius: 50%; background: #000; display: grid; place-items: center; margin-left: -1px; }
.newtab svg { width: 12px; height: 12px; }
.winctl { margin-left: auto; padding-right: 17px; display: flex; gap: 34px; }
.winctl svg { width: 12px; height: 12px; }

.toolbar { height: 48px; display: flex; align-items: center; padding-left: 14px; }
.nav { width: 16px; height: 16px; margin-right: 20px; }
.omnibox { width: 1590px; height: 34px; margin-left: -2px; border-radius: 17px; background: #202329; display: flex; align-items: center; padding: 0 16px 0 5px; }
.site { width: 24px; height: 24px; border-radius: 50%; background: #03050d; display: grid; place-items: center; margin-right: 8px; }
.site svg { width: 14px; height: 12px; }
.url { font-size: 13.5px; letter-spacing: -0.3px; color: #fff; }
.star { width: 16px; height: 16px; margin-left: auto; }
.actions { display: grid; grid-template-columns: 37px 54px 36px 36px 16px; align-items: center; margin-left: 17px; }
.actions svg { width: 16px; height: 16px; }
.actions svg:nth-child(2) { width: 18px; height: 18px; }
.avatar { width: 20px; height: 20px; margin-left: -2px; border-radius: 50%; background: #ab47bc; color: #fff; font-size: 10px; line-height: 20px; text-align: center; }

.bookmarks { height: 25px; display: grid; align-items: center; padding-left: 12px; grid-template-columns: 84px 68px 68px 134px 83px 148px 100px 152px 145px 67px 65px 150px 152px 151px 174px 45px 120px; }
.bm { display: flex; align-items: center; gap: 6px; white-space: nowrap; }
.bm.tight { letter-spacing: -0.42px; }
.bm.loose { letter-spacing: -0.12px; }
.bm svg { width: 16px; height: 16px; }
.bm.wide svg { width: 18px; }
.bm .more { width: 12px; height: 12px; }

/* page */
.page { flex: 1; padding-left: 531px; }
.page a { color: #00f; text-decoration: underline; }
.menu { padding-top: 15px; height: 29px; line-height: 15px; }
.game { width: 500px; height: 318px; border: solid; border-width: 2px; border-color: #fff #7b7b7b #7b7b7b #fff; background: #bdbdbd; padding: 6px; }
.panel { height: 36px; border: 2px solid; border-color: #7b7b7b #fff #fff #7b7b7b; background: #c0c0c0; display: flex; align-items: center; justify-content: space-between; padding: 0 6px; }
.led { display: flex; margin-bottom: 1px; }
.led svg { width: 13px; height: 23px; shape-rendering: crispEdges; }
.face { width: 26px; height: 26px; }
.board { margin-top: 6px; border: 2px solid; border-color: #7b7b7b #fff #fff #7b7b7b; display: grid; grid-template-columns: repeat(30, 16px); grid-auto-rows: 16px; }
.cell { border: 2px solid; border-color: #fff #7b7b7b #7b7b7b #fff; background: #bdbdbd; }
.periods { margin-top: 20px; height: 14px; line-height: 14px; display: flex; gap: 20px; }
.page .current { color: #000; font-weight: bold; }
.scores { margin-top: 16px; display: grid; grid-template-columns: repeat(3, 166.67px); }
.scores h2 { margin: 0 0 5px; font-size: 12px; line-height: 14px; }
.scores table { border-collapse: collapse; table-layout: fixed; width: 155px; }
.scores td { padding: 0; height: 14px; line-height: 14px; white-space: nowrap; }
.scores td:first-child { width: 20px; }
.scores td:nth-child(2) { width: 115px; }
.links { margin-top: 30px; line-height: 14px; }

/* taskbar */
.taskbar { height: 40px; flex: none; display: flex; align-items: stretch; color: #fff; font-family: "Open Sans", "Noto Sans", sans-serif; background: linear-gradient(90deg, #1d2025, #202429 45%, #222725 70%, #222a28 79%, #1f2023 88%, #1e1f22); }
.start { width: 48px; display: grid; place-items: center; }
.start svg { width: 16px; height: 16px; }
.search { width: 288px; background: #f2f2f2; border: 1px solid #b9b9b9; display: flex; align-items: center; color: #2a2a2a; font-size: 15px; letter-spacing: -0.45px; }
.lens { width: 17px; height: 17px; margin: 0 11px; }
.beach { width: 80px; height: 38px; margin-left: auto; }
.taskview { width: 51px; display: grid; place-items: center; padding-right: 3px; }
.taskview svg { width: 17px; height: 16px; }
.apps { display: flex; gap: 1px; }
.app { width: 48px; padding: 8px 12px 0; border-bottom: 2px solid transparent; }
.app svg { width: 24px; height: 24px; }
.app .over { overflow: visible; }
.app.run { background: linear-gradient(#5fcf5f, #5fcf5f) center bottom / 40px 2px no-repeat; border: 0; }
.app.run.focus { background: linear-gradient(#5fcf5f, #5fcf5f) center bottom / 48px 2px no-repeat #4a4e51; }
.app.run.split { background-image: linear-gradient(90deg, #5fcf5f 31px, #439747 31px); }
.ps { font: bold 10.5px "Open Sans", sans-serif; fill: #8ccbfb; }
.epic { font: bold 12px "Liberation Sans", sans-serif; fill: #fff; }
.epic-s { font: bold 4px "Liberation Sans", sans-serif; fill: #fff; }
.rk { font: italic bold 13px "Liberation Sans", sans-serif; fill: #111; }
.cmd { font: bold 6px "Liberation Mono", monospace; fill: #e5e5e5; }
.tray { margin-left: auto; display: flex; align-items: center; padding-right: 24px; position: relative; }
.tray::after { content: ""; position: absolute; right: 4px; top: 0; width: 1px; height: 40px; background: #6a6b6d; }
.thermo { width: 18px; height: 24px; margin-right: 11px; }
.temp { width: 99px; font-size: 14px; letter-spacing: -0.5px; }
.chev { width: 14px; height: 8px; margin-right: 8px; }
.net { width: 17px; height: 16px; margin-right: 7px; }
.vol { width: 17px; height: 16px; margin-right: 9px; }
.clock { width: 62px; margin-right: 14px; display: flex; flex-direction: column; align-items: center; font-size: 12px; line-height: 18px; letter-spacing: -0.4px; }
.note { width: 18px; height: 17px; }
```

FILE: board.js
```js
const board = document.getElementById("board");
for (let i = 0; i < 30 * 16; i++) {
  const cell = document.createElement("div");
  cell.className = "cell";
  board.append(cell);
}
```
